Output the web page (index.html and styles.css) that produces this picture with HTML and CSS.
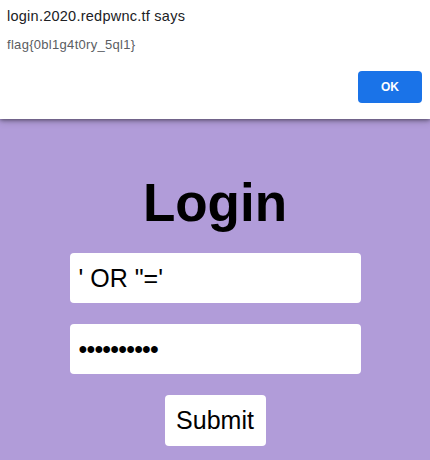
FILE: index.html
```html
<!DOCTYPE html>
<html>
<head>
<meta charset="utf-8">
<link rel="stylesheet" href="styles.css">
</head>
<body>
<div class="dialog">
  <div class="dialog-title">login.2020.redpwnc.tf says</div>
  <div class="dialog-msg">flag{0bl1g4t0ry_5ql1}</div>
  <div class="dialog-actions"><button class="ok">OK</button></div>
</div>
<main class="page">
  <h1 class="title">Login</h1>
  <form class="form">
    <input class="field" type="text" value="' OR &quot;='">
    <input class="field field-pass" type="password" value="1234567890">
    <button class="submit" type="button">Submit</button>
  </form>
</main>
</body>
</html>
```
FILE: styles.css
```css
html, body {
  margin: 0;
  padding: 0;
}
body {
  background: #b19cd9;
  font-family: "Liberation Sans", Arial, sans-serif;
  width: 430px;
  height: 460px;
  overflow: hidden;
  position: relative;
}
.dialog {
  position: absolute;
  top: 0;
  left: 0;
  right: 0;
  height: 119px;
  background: #fff;
  box-shadow: 0 1px 4px rgba(0,0,0,0.45), 0 2px 8px rgba(0,0,0,0.2);
  box-sizing: border-box;
  padding: 7px 8px 0 7px;
  display: flex;
  flex-direction: column;
  z-index: 2;
}
.dialog-title {
  font-size: 14.5px;
  letter-spacing: 0.25px;
  line-height: 18px;
  color: #202124;
}
.dialog-msg {
  margin-top: 12px;
  font-size: 13px;
  letter-spacing: 0.3px;
  line-height: 16px;
  color: #5a5d62;
}
.dialog-actions {
  display: flex;
  justify-content: flex-end;
  margin-top: 18px;
}
.ok {
  width: 64px;
  height: 32px;
  border: none;
  border-radius: 4px;
  background: #1a73e8;
  color: #fff;
  font-family: "Liberation Sans", Arial, sans-serif;
  font-weight: bold;
  font-size: 12px;
  padding: 0;
}
.page {
  display: flex;
  flex-direction: column;
  align-items: center;
  padding-top: 176px;
}
.title {
  margin: 0;
  font-size: 53px;
  line-height: 53px;
  font-weight: bold;
  color: #000;
}
.form {
  display: flex;
  flex-direction: column;
  align-items: center;
  gap: 21px;
  margin-top: 24px;
}
.field {
  width: 291px;
  height: 50px;
  box-sizing: border-box;
  border: none;
  border-radius: 4px;
  background: #fff;
  padding: 0 9px;
  font-family: "Liberation Sans", Arial, sans-serif;
  font-size: 25px;
  color: #000;
  outline: none;
  margin: 0;
}
.field-pass {
  letter-spacing: -0.8px;
}
.submit {
  width: 101px;
  height: 51px;
  border: none;
  border-radius: 4px;
  background: #fff;
  font-family: "Liberation Sans", Arial, sans-serif;
  font-size: 25px;
  color: #000;
  padding: 0;
}
```
